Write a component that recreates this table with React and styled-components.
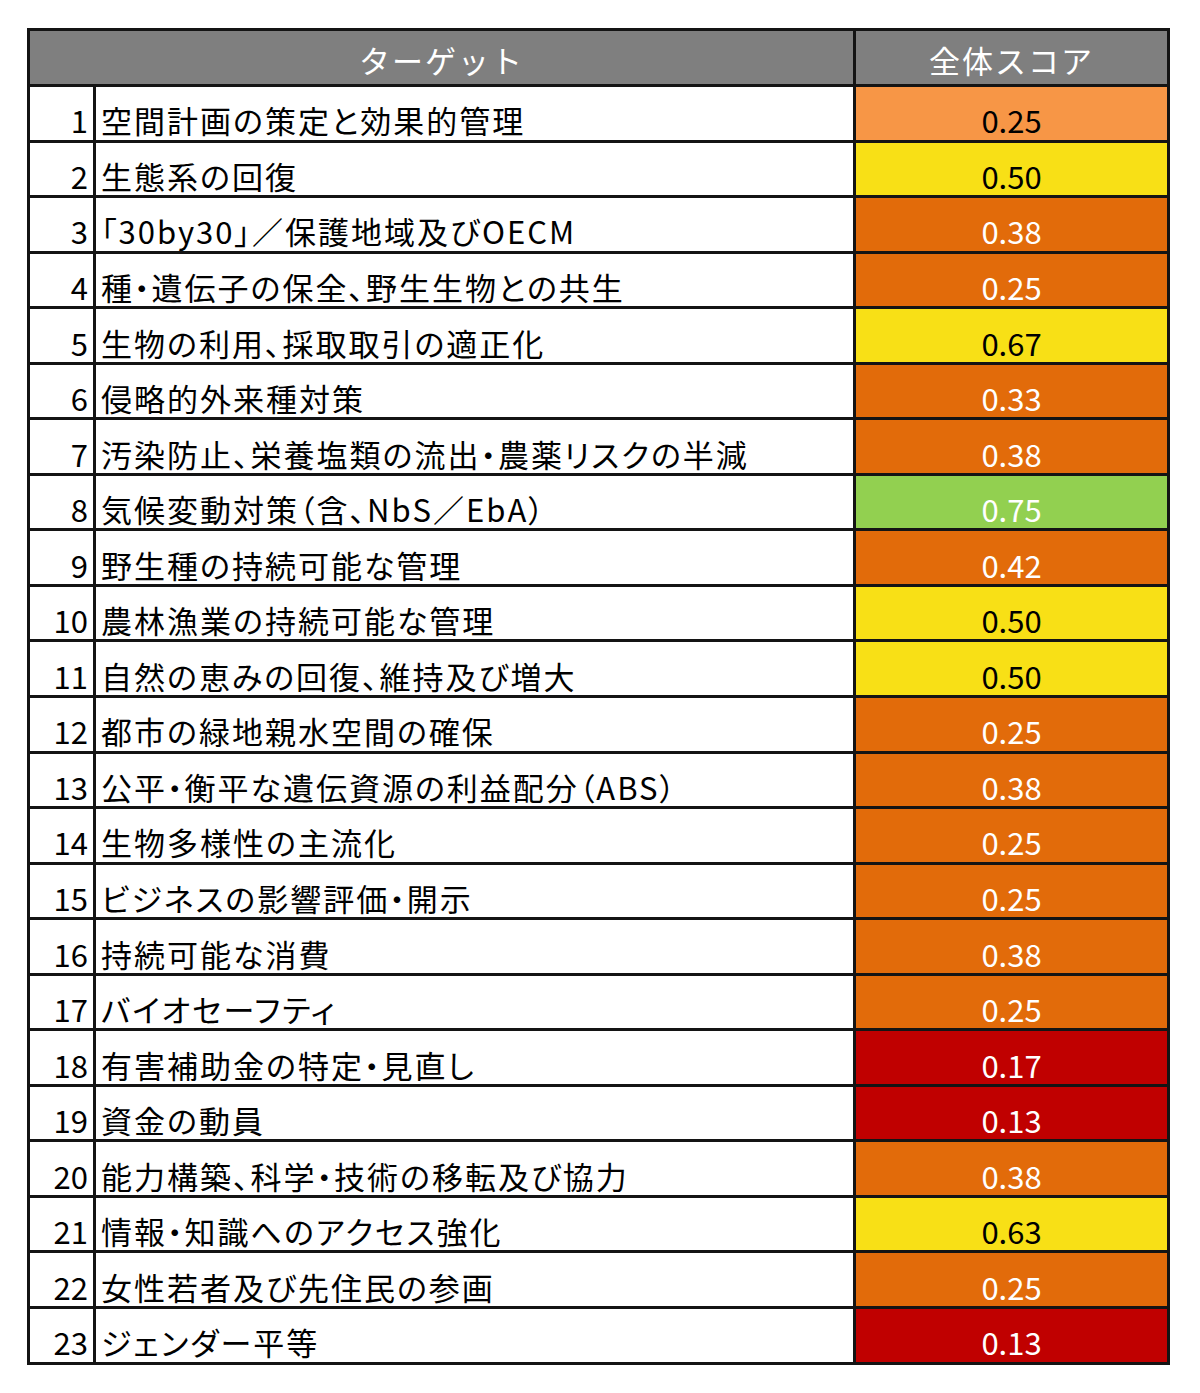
import React from 'react';
import styled, { createGlobalStyle } from 'styled-components';

const GlobalStyle = createGlobalStyle`
  html, body {
    margin: 0;
    padding: 0;
    background: #ffffff;
  }
  body {
    font-family: "Noto Sans CJK JP", "Noto Sans", sans-serif;
  }
`;

const Page = styled.div`
  width: 1200px;
  height: 1393px;
  padding: 28px 0 0 27px;
  box-sizing: border-box;
`;

const Grid = styled.div`
  display: grid;
  width: 1143px;
  box-sizing: border-box;
  grid-template-columns: 63px 757px 311px;
  grid-template-rows: 53px;
  grid-auto-rows: 52.56px;
  gap: 3px;
  padding: 3px;
  background: #141414;
`;

const HeadCell = styled.div`
  grid-column: ${p => p.$span || 'auto'};
  background: #7f7f7f;
  color: #ffffff;
  display: flex;
  align-items: center;
  justify-content: center;
  font-size: 31px;
  letter-spacing: 2px;
  line-height: 1.2;
  padding-top: 4px;
`;

const Cell = styled.div`
  display: flex;
  align-items: flex-end;
  font-size: 31px;
  line-height: 1.2;
  padding-bottom: 1px;
  box-sizing: border-box;
  white-space: nowrap;
`;

const NumCell = styled(Cell)`
  background: #ffffff;
  color: #000000;
  justify-content: flex-end;
  padding-right: 5px;
`;

const TextCell = styled(Cell)`
  background: #ffffff;
  color: #000000;
  padding-left: 5px;
  letter-spacing: 2px;
  font-feature-settings: "palt";
`;

const levels = {
  light: { bg: '#f79646', fg: '#000000' },
  yellow: { bg: '#f8e016', fg: '#000000' },
  orange: { bg: '#e26b0a', fg: '#ffffff' },
  green: { bg: '#92d050', fg: '#ffffff' },
  red: { bg: '#c00000', fg: '#ffffff' },
};

const ScoreCell = styled(Cell)`
  background: ${p => levels[p.$level].bg};
  color: ${p => levels[p.$level].fg};
  justify-content: center;
`;

const rows = [
  ['空間計画の策定と効果的管理', '0.25', 'light'],
  ['生態系の回復', '0.50', 'yellow'],
  ['「30by30」／保護地域及びOECM', '0.38', 'orange'],
  ['種・遺伝子の保全、野生生物との共生', '0.25', 'orange'],
  ['生物の利用、採取取引の適正化', '0.67', 'yellow'],
  ['侵略的外来種対策', '0.33', 'orange'],
  ['汚染防止、栄養塩類の流出・農薬リスクの半減', '0.38', 'orange'],
  ['気候変動対策（含、NbS／EbA）', '0.75', 'green'],
  ['野生種の持続可能な管理', '0.42', 'orange'],
  ['農林漁業の持続可能な管理', '0.50', 'yellow'],
  ['自然の恵みの回復、維持及び増大', '0.50', 'yellow'],
  ['都市の緑地親水空間の確保', '0.25', 'orange'],
  ['公平・衡平な遺伝資源の利益配分（ABS）', '0.38', 'orange'],
  ['生物多様性の主流化', '0.25', 'orange'],
  ['ビジネスの影響評価・開示', '0.25', 'orange'],
  ['持続可能な消費', '0.38', 'orange'],
  ['バイオセーフティ', '0.25', 'orange'],
  ['有害補助金の特定・見直し', '0.17', 'red'],
  ['資金の動員', '0.13', 'red'],
  ['能力構築、科学・技術の移転及び協力', '0.38', 'orange'],
  ['情報・知識へのアクセス強化', '0.63', 'yellow'],
  ['女性若者及び先住民の参画', '0.25', 'orange'],
  ['ジェンダー平等', '0.13', 'red'],
];

export default function App() {
  return (
    <Page>
      <GlobalStyle />
      <Grid>
        <HeadCell $span="span 2">ターゲット</HeadCell>
        <HeadCell>全体スコア</HeadCell>
        {rows.map(([label, score, level], i) => (
          <React.Fragment key={i}>
            <NumCell>{i + 1}</NumCell>
            <TextCell>{label}</TextCell>
            <ScoreCell $level={level}>{score}</ScoreCell>
          </React.Fragment>
        ))}
      </Grid>
    </Page>
  );
}
